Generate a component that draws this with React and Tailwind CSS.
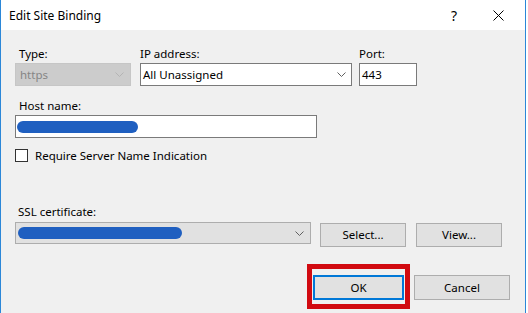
import React from 'react';

const Chevron = ({ color = '#606060' }) => (
  <svg width="9" height="5" viewBox="0 0 9 5" fill="none" className="shrink-0">
    <path d="M0.5 0.5 L4.5 4.5 L8.5 0.5" stroke={color} strokeWidth="1" />
  </svg>
);

const Pill = ({ w }) => (
  <span className={`block h-[12px] rounded-full bg-[#1f5fc0] ${w}`} />
);

export default function App() {
  return (
    <div className="w-[528px] h-[313px] overflow-hidden bg-white flex font-['Segoe_UI','Noto_Sans',sans-serif] text-[11.5px] text-black">
      {/* window */}
      <div className="w-[526px] h-full flex flex-col border-l border-r border-[#2b87d8] shrink-0">
        {/* title bar */}
        <div className="h-[30px] bg-white flex items-center pl-[8px] shrink-0">
          <span className="flex-1 text-[12px] leading-[16px] pt-[1px]">Edit Site Binding</span>
          <span className="text-[14px] leading-[16px] pt-[1px] mr-[36px]">?</span>
          <svg width="11" height="11" viewBox="0 0 11 11" className="mr-[21px]">
            <path d="M0.5 0.5 L10.5 10.5 M10.5 0.5 L0.5 10.5" stroke="#000" strokeWidth="1" />
          </svg>
        </div>

        {/* body */}
        <div className="flex-1 bg-[#f0f0f0] pl-[14px] pr-[15px] pt-[16px]">
          {/* type / ip / port */}
          <div className="flex">
            <div className="w-[116px]">
              <div className="h-[16px] leading-[16px] pl-[4px]">Type:</div>
              <div className="mt-[1px] h-[23px] bg-[#cccccc] border border-[#c6c6c6] flex items-center justify-between pl-[4px] pr-[6px] text-[#858585]">
                <span>https</span>
                <Chevron color="#b4b4b4" />
              </div>
            </div>
            <div className="w-[212px] ml-[9px]">
              <div className="h-[16px] leading-[16px]">IP address:</div>
              <div className="mt-[1px] h-[23px] bg-white border border-[#7a7a7a] flex items-center justify-between pl-[2px] pr-[5px]">
                <span>All Unassigned</span>
                <Chevron />
              </div>
            </div>
            <div className="w-[58px] ml-[7px]">
              <div className="h-[16px] leading-[16px]">Port:</div>
              <div className="mt-[1px] h-[23px] bg-white border border-[#7a7a7a] flex items-center pl-[2px]">
                443
              </div>
            </div>
          </div>

          {/* host name */}
          <div className="mt-[12px] h-[16px] leading-[16px] pl-[4px]">Host name:</div>
          <div className="mt-[1px] w-[302px] h-[23px] bg-white border border-[#7a7a7a] flex items-center pl-[1px]">
            <Pill w="w-[121px]" />
          </div>

          {/* sni */}
          <div className="mt-[11px] h-[13px] flex items-center">
            <span className="w-[13px] h-[13px] bg-white border border-[#333333] shrink-0" />
            <span className="ml-[7px] leading-[13px]">Require Server Name Indication</span>
          </div>

          {/* ssl certificate */}
          <div className="mt-[42px] h-[16px] leading-[16px] pl-[3px]">SSL certificate:</div>
          <div className="mt-[2px] flex items-start">
            <div className="w-[296px] h-[22px] bg-[#e1e1e1] border border-[#adadad] flex items-center justify-between pl-[2px] pr-[6px]">
              <Pill w="w-[164px]" />
              <Chevron />
            </div>
            <button className="ml-[9px] mt-[1px] w-[86px] h-[24px] bg-[#e1e1e1] border border-[#adadad] leading-none">Select...</button>
            <button className="ml-[10px] mt-[1px] w-[86px] h-[24px] bg-[#e1e1e1] border border-[#adadad] leading-none">View...</button>
          </div>

          {/* ok / cancel */}
          <div className="mt-[28px] flex justify-end">
            <div className="relative">
              <button className="w-[91px] h-[25px] bg-[#e1e1e1] border-2 border-[#0078d7] leading-none">OK</button>
              <span className="absolute -left-[6px] -right-[6px] -top-[11px] -bottom-[9px] border-[5px] border-[#d10a10] pointer-events-none" />
            </div>
            <button className="ml-[10px] w-[96px] h-[25px] bg-[#e1e1e1] border border-[#adadad] leading-none">Cancel</button>
          </div>
        </div>
      </div>
    </div>
  );
}
